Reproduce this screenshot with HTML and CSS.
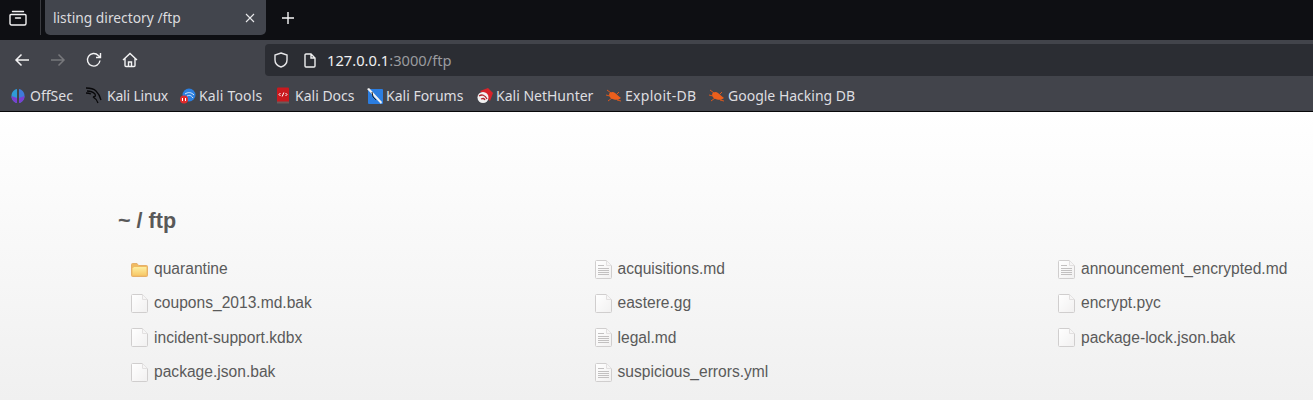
FILE: index.html
```html
<!DOCTYPE html>
<html lang="en">
<head>
<meta charset="utf-8">
<title>listing directory /ftp</title>
<link rel="stylesheet" href="styles.css">
</head>
<body>
<svg class="defs" width="0" height="0" aria-hidden="true">
  <defs>
    <linearGradient id="filefill" x1="0" y1="0" x2="1" y2="1"><stop offset="0" stop-color="#ffffff"/><stop offset="1" stop-color="#f1f0f0"/></linearGradient>
    <linearGradient id="folderfill" x1="0" y1="0" x2="0" y2="1"><stop offset="0" stop-color="#fdeea0"/><stop offset="1" stop-color="#f7c868"/></linearGradient>
    <symbol id="file" viewBox="0 0 17 19"><path d="M1.500.5h10l5 5v12a1 1 0 0 1-1 1h-14a1 1 0 0 1-1-1v-16a1 1 0 0 1 1-1z" fill="url(#filefill)" stroke="#d0cece"/><path d="M11.500.5v5h5" fill="#f6f5f5" stroke="#e2e0e0"/></symbol>
    <symbol id="doc" viewBox="0 0 17 19"><use href="#file" width="17" height="19"/><path d="M3 5.500h6M3 8.500h11M3 10.500h11M3 12.500h11M3 14.500h11" stroke="#c2c0c0" stroke-width="1" fill="none"/></symbol>
    <symbol id="bug" viewBox="0 0 16 16"><path d="M1 2l4 3M0 7l4 1M2 13l4-3M13 4l-2 2M15 13l-4-1" stroke="#d9581e" stroke-width="1" fill="none"/><path d="M3 6c1-2 4-3 6-1 2 1 3 3 6 5-2 2-5 2-7 1.500C5 11 3 9 3 6z" fill="#ec5f1c"/></symbol>
  </defs>
</svg>
<header class="browser">
  <div class="tabbar">
    <div class="tabview">
      <svg width="18" height="16" viewBox="0 0 18 16"><path d="M3.500 1.500h11M2 4.500h14a1 1 0 0 1 1 1v8a1.500 1.500 0 0 1-1.500 1.500h-13A1.500 1.500 0 0 1 1 13.500v-8a1 1 0 0 1 1-1zM6.500 8h5" fill="none" stroke="#f2f2f3" stroke-width="1.400" stroke-linecap="round"/></svg>
    </div>
    <div class="tab">
      <span class="tabtitle">listing directory /ftp</span>
      <svg width="10" height="10" viewBox="0 0 10 10"><path d="M1 1l8 8M9 1l-8 8" stroke="#e8e8ea" stroke-width="1.100"/></svg>
    </div>
    <svg class="newtab" width="12" height="12" viewBox="0 0 12 12"><path d="M6 0v12M0 6h12" stroke="#f6f6f7" stroke-width="1.400"/></svg>
  </div>
  <div class="navbar">
    <div class="navbtns">
      <svg width="16" height="14" viewBox="0 0 16 14"><path d="M15 7H2M7.500 1.500L2 7l5.500 5.500" fill="none" stroke="#f3f3f4" stroke-width="1.500"/></svg>
      <svg width="16" height="14" viewBox="0 0 16 14"><path d="M1 7h13M8.500 1.500L14 7l-5.500 5.500" fill="none" stroke="#77787c" stroke-width="1.500"/></svg>
      <svg width="16" height="16" viewBox="0 0 16 16"><path d="M14 8.500A6.300 6.300 0 1 1 12.300 3.400L14.500 5.500M14.500 1v4.500H10" fill="none" stroke="#f3f3f4" stroke-width="1.400"/></svg>
      <svg width="16" height="16" viewBox="0 0 16 16"><path d="M1 8l7-6.500L15 8M3 6.500v7a1 1 0 0 0 1 1h8a1 1 0 0 0 1-1v-7M6.500 14.500v-4.500h3v4.500" fill="none" stroke="#f3f3f4" stroke-width="1.400"/></svg>
    </div>
    <div class="urlbar">
      <svg width="16" height="16" viewBox="0 0 16 16"><path d="M8 1l6 2v5c0 3.500-3 6-6 7-3-1-6-3.500-6-7V3z" fill="none" stroke="#e6e6e8" stroke-width="1.400"/></svg>
      <svg width="12" height="15" viewBox="0 0 12 15"><path d="M1 2a1 1 0 0 1 1-1h5l4 4v8a1 1 0 0 1-1 1H2a1 1 0 0 1-1-1zM7 1v4h4" fill="none" stroke="#eeeeef" stroke-width="1.400"/></svg>
      <span class="url">127.0.0.1<span class="urldim">:3000/ftp</span></span>
    </div>
  </div>
  <nav class="bookmarks">
    <a class="bm bm-offsec"><svg class="bmicon" width="16" height="16" viewBox="0 0 16 16"><path d="M7 1v14C4 14.500 1.500 12 1.500 8S4 1.500 7 1z" fill="#2f9bd6"/><path d="M9 1v14c3-.5 5.500-3 5.500-7S12 1.500 9 1z" fill="#3f7ad8"/><path d="M1.500 8c0 4 2.500 6.500 5.500 7v-5zM14.500 8c0 4-2.500 6.500-5.500 7v-5z" fill="#7a3fd0"/></svg>OffSec</a>
    <a class="bm bm-linux"><svg class="bmicon" width="17" height="17" viewBox="0 0 17 17"><path d="M0 1c4 0 8 1 10 3 2 2 4 5 5 9M1 4c3 0 6 1 8 3 1 2 0 3-2 3 2 1 4 3 5 6M0 6c2 0 3 0 5 1" fill="none" stroke="#08080a" stroke-width="1.300"/></svg>Kali Linux</a>
    <a class="bm bm-tools"><svg class="bmicon" width="16" height="16" viewBox="0 0 16 16"><circle cx="9" cy="7" r="6.500" fill="#2b7fe0"/><path d="M5 6c3-2 6-2 9 1M7 8c2-1 4-1 6 2" fill="none" stroke="#dcecff" stroke-width="1"/><circle cx="4" cy="11.500" r="4" fill="#e02b2b"/><path d="M2.500 10v3M5.500 10v3" stroke="#fff" stroke-width="1"/></svg>Kali Tools</a>
    <a class="bm bm-docs"><svg class="bmicon" width="16" height="17" viewBox="0 0 16 17"><rect x="1" y="0.500" width="12" height="15" rx="1" fill="#c9191e"/><rect x="1" y="14.500" width="12" height="2" fill="#6b5a5a"/><path d="M4.500 6L3 7.500 4.500 9M9.500 6L11 7.500 9.500 9M7.800 5.500L6.200 9.500" fill="none" stroke="#fff" stroke-width="1"/></svg>Kali Docs</a>
    <a class="bm bm-forums"><svg class="bmicon" width="16" height="16" viewBox="0 0 16 16"><rect x="1" y="1" width="15" height="15" rx="1" fill="#2b7de0"/><path d="M0 1l2-1 13 14-1 2z" fill="#f2f2f2"/><path d="M5 4l1 5 3 3" fill="none" stroke="#222" stroke-width="1"/></svg>Kali Forums</a>
    <a class="bm bm-nethunter"><svg class="bmicon" width="16" height="16" viewBox="0 0 16 16"><path d="M3 3l8-3 5 5-3 8z" fill="#d8232a"/><circle cx="6" cy="9.500" r="5.500" fill="#f1f1f1"/><path d="M2 8c3-2 6-1 8 3M4 11c2-1 3-1 4 1" fill="none" stroke="#b0232a" stroke-width="1.300"/></svg>Kali NetHunter</a>
    <a class="bm bm-exploit"><svg class="bmicon" width="16" height="16"><use href="#bug"/></svg>Exploit-DB</a>
    <a class="bm"><svg class="bmicon" width="16" height="16"><use href="#bug"/></svg>Google Hacking DB</a>
  </nav>
</header>
<main class="page">
  <h1 class="crumbs">~ / ftp</h1>
  <ul class="files">
    <li class="file"><svg class="ficon" width="17" height="19" viewBox="0 0 17 19"><path d="M1.500 3.500h4.500l1.500 2h8a1 1 0 0 1 1 1v9a1 1 0 0 1-1 1h-14a1 1 0 0 1-1-1v-11a1 1 0 0 1 1-1z" fill="#f0bb62" stroke="#e6b06a"/><path d="M1.500 8.500l1.500-1.500h12.500v8.500h-14z" fill="url(#folderfill)"/></svg>quarantine</li>
    <li class="file"><svg class="ficon" width="17" height="19"><use href="#doc"/></svg>acquisitions.md</li>
    <li class="file"><svg class="ficon" width="17" height="19"><use href="#doc"/></svg>announcement_encrypted.md</li>
    <li class="file"><svg class="ficon" width="17" height="19"><use href="#file"/></svg>coupons_2013.md.bak</li>
    <li class="file"><svg class="ficon" width="17" height="19"><use href="#file"/></svg>eastere.gg</li>
    <li class="file"><svg class="ficon" width="17" height="19"><use href="#file"/></svg>encrypt.pyc</li>
    <li class="file"><svg class="ficon" width="17" height="19"><use href="#file"/></svg>incident-support.kdbx</li>
    <li class="file"><svg class="ficon" width="17" height="19"><use href="#doc"/></svg>legal.md</li>
    <li class="file"><svg class="ficon" width="17" height="19"><use href="#file"/></svg>package-lock.json.bak</li>
    <li class="file"><svg class="ficon" width="17" height="19"><use href="#file"/></svg>package.json.bak</li>
    <li class="file"><svg class="ficon" width="17" height="19"><use href="#doc"/></svg>suspicious_errors.yml</li>
  </ul>
</main>
</body>
</html>
```
FILE: styles.css
```css
* { box-sizing: border-box; }
html, body { margin: 0; height: 400px; overflow: hidden; }
body { background: #f0f0f0; }
.defs { position: absolute; }
.browser { font-family: "Noto Sans", sans-serif; color: #e8e8ea; }
.tabbar { height: 40px; background: #0e0f13; display: flex; align-items: flex-start; }
.tabview { width: 41px; height: 35px; border-right: 1px solid #3a3b40; display: flex; align-items: center; justify-content: center; padding-right: 5px; }
.tab { width: 221px; height: 35px; margin-left: 4px; background: #42454d; border-radius: 0 0 5px 5px; display: flex; align-items: center; justify-content: space-between; padding: 0 11px 0 8px; }
.tabtitle { font-size: 13.8px; color: #dcdcdf; }
.newtab { margin: 12px 0 0 16px; }
.navbar { height: 40px; background: #42444b; display: flex; align-items: center; }
.navbtns { display: flex; align-items: center; gap: 20px; padding-left: 14px; width: 265px; }
.urlbar { width: 1048px; height: 32px; background: #2b2d33; border-radius: 4px 0 0 4px; display: flex; align-items: center; padding-left: 8px; }
.urlbar svg + svg { margin-left: 15px; }
.url { font-size: 14.7px; margin-left: 11px; color: #f0f0f1; }
.urldim { color: #9a9b9f; }
.bookmarks { height: 32px; background: #42444b; border-bottom: 1px solid #08080a; display: flex; align-items: center; padding-left: 10px; }
.bm { display: flex; align-items: center; flex: none; gap: 3px; font-size: 14px; color: #dedee0; white-space: nowrap; }
.bmicon { flex: none; }
.bm-offsec { width: 76px; gap: 4px; }
.bm-linux { width: 94px; gap: 4px; letter-spacing: -0.2px; }
.bm-tools { width: 96px; letter-spacing: 0.2px; }
.bm-docs { width: 91px; }
.bm-forums { width: 110px; }
.bm-nethunter { width: 129px; }
.bm-exploit { width: 103px; letter-spacing: 0.3px; }
.page { height: 288px; background: linear-gradient(#ffffff, #f0f0f0); font-family: "Liberation Sans", Arial, sans-serif; padding: 96px 0 0 118px; }
.crumbs { margin: 0; font-size: 21.6px; line-height: 26px; font-weight: 700; color: #595959; }
.files { list-style: none; margin: 18px 0 0; padding: 0; display: grid; grid-template-columns: 463.5px 463.5px auto; grid-auto-rows: 34.33px; }
.file { display: flex; align-items: center; padding-left: 13px; gap: 6px; font-size: 15.6px; color: #5a5a5a; white-space: nowrap; }
.ficon { flex: none; }
```
